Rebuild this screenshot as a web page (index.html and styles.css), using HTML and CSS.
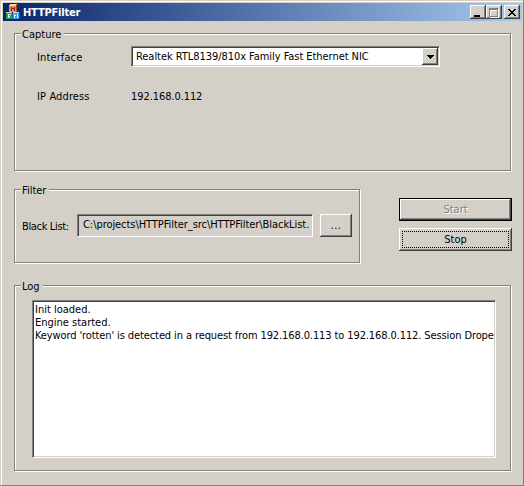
FILE: index.html
```
<!DOCTYPE html>
<html lang="en">
<head>
<meta charset="utf-8">
<title>HTTPFilter</title>
<link rel="stylesheet" href="styles.css">
</head>
<body>
<div class="window">
  <header class="titlebar">
    <svg class="app-icon" width="16" height="16" viewBox="0 0 16 16" shape-rendering="crispEdges">
      <path fill="#e08a60" d="M4 2h7v6H4z"/><path fill="#f8d0b0" d="M4 1l2-1h6l-2 2H4z"/><path fill="#b04a28" d="M11 2l1-1v6l-1 1z"/>
      <path fill="#8c2c14" d="M6 3h1v4H6zM9 3h1v4H9zM7 4h2v1H7z"/>
      <path fill="#20a050" d="M1 9h6v6H1z"/><path fill="#a8e0a8" d="M1 8h6v1H1z"/><path fill="#e4f8e4" d="M3 10h3v1H4v1h1v1H4v1H3z"/>
      <path fill="#3c96dc" d="M8 9h6v6H8z"/><path fill="#b8e0f8" d="M8 8h6v1H8z"/><path fill="#1c58a8" d="M14 9h1v5h-1zM7 9h1v6H7z"/><path fill="#e8f6ff" d="M9 10h1v4H9zM12 10h1v4h-1zM10 11h1v1h-1z"/>
    </svg>
    <h1 class="title">HTTPFilter</h1>
    <div class="controls">
      <button class="ctl" aria-label="Minimize"><svg width="12" height="10" shape-rendering="crispEdges"><path d="M2 8h6v2H2z"/></svg></button>
      <button class="ctl" aria-label="Maximize"><svg width="12" height="11" shape-rendering="crispEdges"><path fill="#fff" fill-rule="evenodd" d="M2 2h9v9H2zM3 4v6h7V4z"/><path fill="#808080" fill-rule="evenodd" d="M1 1h9v9H1zM2 3v6h7V3z"/></svg></button>
      <button class="ctl close" aria-label="Close"><svg width="12" height="10" shape-rendering="crispEdges"><path d="M2 2h2v1h1v1h2V3h1V2h2v1H9v1H8v1H7v1h1v1h1v1h1v1H8V8H7V7H5v1H4v1H2V8h1V7h1V6h1V5H4V4H3V3H2z"/></svg></button>
    </div>
  </header>
  <main class="dialog">
    <section class="group capture">
      <h2 class="legend">Capture</h2>
      <div class="row">
        <span class="name">Interface</span>
        <div class="combo sunken">
          <span class="combo-text">Realtek RTL8139/810x Family Fast Ethernet NIC</span>
          <button class="drop raised" aria-label="Open list"><svg width="7" height="4" shape-rendering="crispEdges"><path d="M0 0h7v1H6v1H5v1H4v1H3V3H2V2H1V1H0z"/></svg></button>
        </div>
      </div>
      <div class="row address">
        <span class="name">IP Address</span>
        <span class="number">192.168.0.112</span>
      </div>
    </section>
    <div class="middle">
      <section class="group filter">
        <h2 class="legend">Filter</h2>
        <div class="filter-row">
          <span class="filter-name">Black List:</span>
          <div class="path sunken">C:\projects\HTTPFilter_src\HTTPFilter\BlackList.</div>
          <button class="btn raised browse">...</button>
        </div>
      </section>
      <div class="actions">
        <div class="default-ring"><button class="btn raised start" disabled>Start</button></div>
        <button class="btn raised stop"><span class="focus">Stop</span></button>
      </div>
    </div>
    <section class="group log">
      <h2 class="legend">Log</h2>
      <ul class="list sunken">
        <li>Init loaded.</li>
        <li>Engine started.</li>
        <li class="long">Keyword 'rotten' is detected in a request from 192.168.0.113 to 192.168.0.112. Session Drope</li>
      </ul>
    </section>
  </main>
</div>
</body>
</html>
```
FILE: styles.css
```
* { box-sizing: border-box; }
body { margin: 0; }
h1, h2, ul { margin: 0; padding: 0; font: inherit; list-style: none; }
button { font: inherit; padding: 0; margin: 0; border: 0; border-radius: 0; background: #d4d0c8; color: #000; }
svg { display: block; }

.window {
  width: 524px; height: 486px; padding: 2px;
  overflow: hidden;
  border: 1px solid; border-color: #d4d0c8 #808080 #808080 #d4d0c8;
  box-shadow: inset 1px 1px #fff;
  background: #d4d0c8; color: #000;
  font: 11px/13px "DejaVu Sans Condensed", "DejaVu Sans", sans-serif;
  white-space: nowrap;
}

.titlebar {
  display: flex; align-items: center;
  width: 519px; height: 18px; padding: 0 2px;
  background: linear-gradient(to right, #0a246a, #a6caf0);
}
.title { margin-left: 2px; color: #fff; font-weight: bold; letter-spacing: -0.2px; }
.controls { display: flex; margin-left: auto; }
.ctl {
  width: 16px; height: 14px; padding: 1px 2px;
  box-shadow: inset -1px -1px #404040, inset 1px 1px #fff, inset -2px -2px #808080;
}
.close { margin-left: 2px; }

.raised { box-shadow: inset -1px -1px #404040, inset 1px 1px #fff, inset -2px -2px #808080; }
.sunken {
  border: 1px solid; border-color: #808080 #fff #fff #808080;
  box-shadow: inset 1px 1px #404040, inset -1px -1px #d4d0c8;
}

.dialog { padding: 12px 0 0 11px; }
.group {
  border: 1px solid #808080;
  box-shadow: 1px 1px #fff, inset 1px 1px #fff;
}
.legend { width: max-content; height: 13px; margin: -6px 0 0 6px; padding: 0 3px 0 1px; background: #d4d0c8; }

.capture { width: 497px; height: 138px; }
.row { display: flex; align-items: center; height: 21px; margin: 5px 0 0 22px; }
.name { width: 94px; padding-top: 2px; letter-spacing: 0.12px; }
.address { margin-top: 18px; }
.number { padding-top: 2px; letter-spacing: -0.08px; }
.combo { display: flex; width: 309px; height: 21px; padding: 1px; background: #fff; letter-spacing: -0.05px; }
.combo-text { flex: 1; padding: 2px 0 0 3px; }
.drop { display: flex; align-items: center; justify-content: center; width: 16px; }

.middle { display: flex; margin-top: 18px; }
.filter { width: 346px; height: 74px; }
.filter-row { display: flex; align-items: center; margin: 17px 0 0 7px; }
.filter-name { width: 55px; padding-top: 2px; letter-spacing: -0.35px; }
.path { width: 236px; height: 23px; padding: 3px 0 0 5px; letter-spacing: -0.06px; }
.btn { display: flex; align-items: center; justify-content: center; height: 23px; }
.browse { width: 32px; margin-left: 7px; letter-spacing: 0.5px; }
.actions { width: 113px; margin: 9px 0 0 39px; }
.default-ring { border: 1px solid #000; }
.start { width: 111px; height: 21px; color: #808080; text-shadow: 1px 1px #fff; }
.stop { width: 113px; margin-top: 7px; padding: 3px; }
.focus { display: flex; align-items: center; justify-content: center; width: 107px; height: 17px; border: 1px dotted #000; }

.log { width: 497px; height: 186px; margin-top: 22px; }
.list { width: 464px; height: 158px; margin: 7px 0 0 17px; padding: 2px 0 0 2px; background: #fff; }
.long { letter-spacing: -0.105px; }
```
